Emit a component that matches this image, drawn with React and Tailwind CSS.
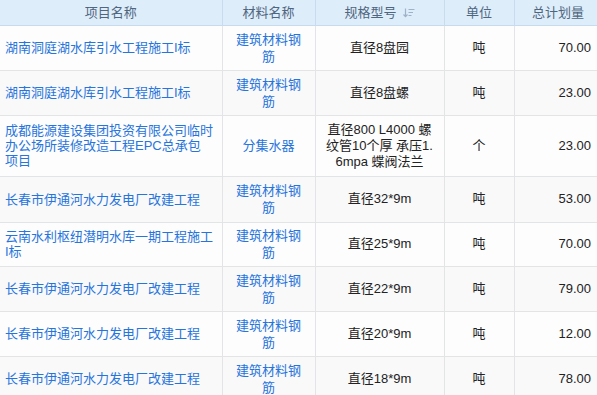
import React from 'react';

const rows = [
  { project: ['湖南洞庭湖水库引水工程施工I标'], material: ['建筑材料钢', '筋'], spec: ['直径8盘园'], unit: '吨', qty: '70.00', h: 'h-[45px]' },
  { project: ['湖南洞庭湖水库引水工程施工I标'], material: ['建筑材料钢', '筋'], spec: ['直径8盘螺'], unit: '吨', qty: '23.00', h: 'h-[45px]' },
  {
    project: ['成都能源建设集团投资有限公司临时', '办公场所装修改造工程EPC总承包', '项目'],
    material: ['分集水器'],
    spec: ['直径800 L4000 螺', '纹管10个厚 承压1.', '6mpa 蝶阀法兰'],
    unit: '个',
    qty: '23.00',
    h: 'h-[61px]',
  },
  { project: ['长春市伊通河水力发电厂改建工程'], material: ['建筑材料钢', '筋'], spec: ['直径32*9m'], unit: '吨', qty: '53.00', h: 'h-[46px]' },
  { project: ['云南水利枢纽潜明水库一期工程施工', 'I标'], material: ['建筑材料钢', '筋'], spec: ['直径25*9m'], unit: '吨', qty: '70.00', h: 'h-[44px]' },
  { project: ['长春市伊通河水力发电厂改建工程'], material: ['建筑材料钢', '筋'], spec: ['直径22*9m'], unit: '吨', qty: '79.00', h: 'h-[45px]' },
  { project: ['长春市伊通河水力发电厂改建工程'], material: ['建筑材料钢', '筋'], spec: ['直径20*9m'], unit: '吨', qty: '12.00', h: 'h-[45px]' },
  { project: ['长春市伊通河水力发电厂改建工程'], material: ['建筑材料钢', '筋'], spec: ['直径18*9m'], unit: '吨', qty: '78.00', h: 'h-[45px]' },
];

function Lines({ lines }) {
  return lines.map((l, i) => (
    <React.Fragment key={i}>
      {i > 0 && <br />}
      {l}
    </React.Fragment>
  ));
}

function SortIcon() {
  return (
    <svg width="12" height="10" viewBox="0 0 12 10" className="ml-[6px] inline-block align-[-1px]">
      <path d="M2.5 0.5v8M0.5 6.5l2 2.2 2-2.2" stroke="#9fb3c8" strokeWidth="1.2" fill="none" />
      <path d="M5.5 1.5h6M5.5 4.5h4.5M5.5 7.5h3" stroke="#9fb3c8" strokeWidth="1.2" fill="none" />
    </svg>
  );
}

export default function App() {
  return (
    <div className="w-[597px] h-[395px] overflow-hidden bg-white font-['Liberation_Sans','Noto_Sans_CJK_SC',sans-serif] text-[13px]">
      <table className="w-[597px] table-fixed border-collapse">
        <colgroup>
          <col className="w-[222px]" />
          <col className="w-[93px]" />
          <col className="w-[129px]" />
          <col className="w-[70px]" />
          <col className="w-[83px]" />
        </colgroup>
        <thead>
          <tr className="h-[25px] bg-[#deedfa] text-[#4f6680] border-b border-[#c6dbee]">
            <th className="font-normal text-center border-r border-[#c9dcee]">项目名称</th>
            <th className="font-normal text-center border-r border-[#c9dcee]">材料名称</th>
            <th className="font-normal text-center border-r border-[#c9dcee]">
              规格型号
              <SortIcon />
            </th>
            <th className="font-normal text-center border-r border-[#c9dcee]">单位</th>
            <th className="font-normal text-right pr-[13px]">总计划量</th>
          </tr>
        </thead>
        <tbody>
          {rows.map((r, i) => (
            <tr key={i} className={`${r.h} border-b border-[#e3e4e6] ${i % 2 === 0 ? 'bg-[#fdfdfd]' : 'bg-[#f9f9fa]'}`}>
              <td className="pl-[5px] pr-1 text-[#2674dc] leading-[15px] border-r border-[#e3e4e6] align-middle">
                <Lines lines={r.project} />
              </td>
              <td className="text-center text-[#2674dc] leading-[17px] border-r border-[#e3e4e6] align-middle">
                <Lines lines={r.material} />
              </td>
              <td className="text-center text-[#222] leading-[16px] border-r border-[#e3e4e6] align-middle">
                <Lines lines={r.spec} />
              </td>
              <td className="text-center text-[#222] border-r border-[#e3e4e6] align-middle">{r.unit}</td>
              <td className="text-right pr-[6px] text-[#222] align-middle">{r.qty}</td>
            </tr>
          ))}
        </tbody>
      </table>
    </div>
  );
}
